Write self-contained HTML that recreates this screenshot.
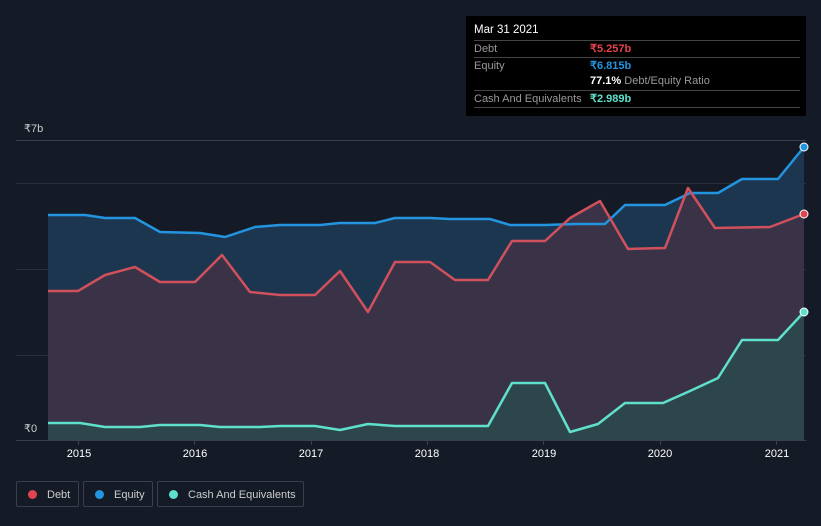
<!DOCTYPE html><html><head><style>
body{margin:0;width:821px;height:526px;background:#151b26;font-family:"Liberation Sans",sans-serif;overflow:hidden;position:relative}
.tt{position:absolute;left:466px;top:16px;width:340px;height:100px;background:#000;color:#fff;font-size:11px}
.tt .r{position:absolute;left:8px;width:326px;border-top:1px solid #444;height:16px;line-height:16px;color:#999}
.leg{position:absolute;top:481px;height:26px;border:1px solid #3a404b;border-radius:2px;color:#ccc;font-size:11px;line-height:26px;box-sizing:border-box}
.dot{display:inline-block;width:9px;height:9px;border-radius:50%;margin:0 10px 0 11px;vertical-align:-1px}
</style></head><body>
<svg width="821" height="526" style="position:absolute;left:0;top:0">
<g stroke="#2a303b" stroke-width="1">
<line x1="16" x2="806" y1="140.5" y2="140.5" stroke="#3a404b"/><line x1="16" x2="806" y1="183.5" y2="183.5"/><line x1="16" x2="806" y1="269.5" y2="269.5"/><line x1="16" x2="806" y1="355.5" y2="355.5"/>
</g>
<polygon fill="#1c3650" points="48,215 85,215 105,218 135,218 160,232 200,233 225,237 255,227 280,225 320,225 340,223 375,223 395,218 430,218 450,219 490,219 510,225 545,225 575,224 605,224 625,205 665,205 690,193 718,193 742,179 778,179 804,147 804,440 48,440"/>
<polygon fill="#3a3347" points="48,291 78,291 105,275 135,267 160,282 195,282 222,255 250,292 280,295 315,295 340,271 368,312 395,262 430,262 455,280 488,280 512,241 545,241 570,218 600,201 628,249 665,248 688,188 715,228 770,227 804,214 804,440 48,440"/>
<polygon fill="#2d464b" points="48,423 80,423 105,427 140,427 160,425 200,425 220,427 260,427 280,426 315,426 340,430 368,424 395,426 450,426 488,426 512,383 545,383 570,432 598,424 625,403 663,403 690,391 718,378 742,340 778,340 804,312 804,440 48,440"/>
<g fill="none" stroke-width="2.5" stroke-linejoin="round">
<polyline stroke="#2394df" points="48,215 85,215 105,218 135,218 160,232 200,233 225,237 255,227 280,225 320,225 340,223 375,223 395,218 430,218 450,219 490,219 510,225 545,225 575,224 605,224 625,205 665,205 690,193 718,193 742,179 778,179 804,147"/>
<polyline stroke="#d0505c" points="48,291 78,291 105,275 135,267 160,282 195,282 222,255 250,292 280,295 315,295 340,271 368,312 395,262 430,262 455,280 488,280 512,241 545,241 570,218 600,201 628,249 665,248 688,188 715,228 770,227 804,214"/>
<polyline stroke="#5fe0cc" points="48,423 80,423 105,427 140,427 160,425 200,425 220,427 260,427 280,426 315,426 340,430 368,424 395,426 450,426 488,426 512,383 545,383 570,432 598,424 625,403 663,403 690,391 718,378 742,340 778,340 804,312"/>
</g>
<circle cx="804" cy="147" r="4" fill="#2394df" stroke="#fff" stroke-width="1"/>
<circle cx="804" cy="214" r="4" fill="#e0444f" stroke="#fff" stroke-width="1"/>
<circle cx="804" cy="312" r="4" fill="#5fe0cc" stroke="#fff" stroke-width="1"/>
<rect x="16" y="420" width="32" height="20" fill="#151b26"/>
<line x1="16" x2="806" y1="440.5" y2="440.5" stroke="#3a404b"/>
<g stroke="#3a404b"><line x1="78.5" x2="78.5" y1="440" y2="445"/><line x1="194.5" x2="194.5" y1="440" y2="445"/><line x1="311.5" x2="311.5" y1="440" y2="445"/><line x1="427.5" x2="427.5" y1="440" y2="445"/><line x1="543.5" x2="543.5" y1="440" y2="445"/><line x1="660.5" x2="660.5" y1="440" y2="445"/><line x1="776.5" x2="776.5" y1="440" y2="445"/></g>
<g fill="#fff" font-size="11" text-anchor="middle" font-family="Liberation Sans,sans-serif">
<text x="79" y="457">2015</text><text x="195" y="457">2016</text><text x="311" y="457">2017</text><text x="427" y="457">2018</text><text x="544" y="457">2019</text><text x="660" y="457">2020</text><text x="777" y="457">2021</text>
</g>
<g fill="#ccc" font-size="11" font-family="Liberation Sans,sans-serif"><text x="24" y="132">₹7b</text><text x="24" y="432">₹0</text></g>
</svg>
<div class="tt">
<div style="position:absolute;left:8px;top:8px;font-size:11.5px">Mar 31 2021</div>
<div class="r" style="top:24px">Debt<span style="position:absolute;left:116px;color:#e8424c;font-weight:bold">₹5.257b</span></div>
<div class="r" style="top:41px">Equity<span style="position:absolute;left:116px;color:#2394df;font-weight:bold">₹6.815b</span></div>
<div class="r" style="top:57px;border:none"><span style="position:absolute;left:116px"><b style="color:#fff">77.1%</b> Debt/Equity Ratio</span></div>
<div class="r" style="top:74px;border-bottom:1px solid #444">Cash And Equivalents<span style="position:absolute;left:116px;color:#5fe0cc;font-weight:bold">₹2.989b</span></div>
</div>
<div class="leg" style="left:16px;width:63px"><span class="dot" style="background:#e0444f"></span>Debt</div>
<div class="leg" style="left:83px;width:70px"><span class="dot" style="background:#2394df"></span>Equity</div>
<div class="leg" style="left:157px;width:147px"><span class="dot" style="background:#5fe0cc"></span>Cash And Equivalents</div>
</body></html>
